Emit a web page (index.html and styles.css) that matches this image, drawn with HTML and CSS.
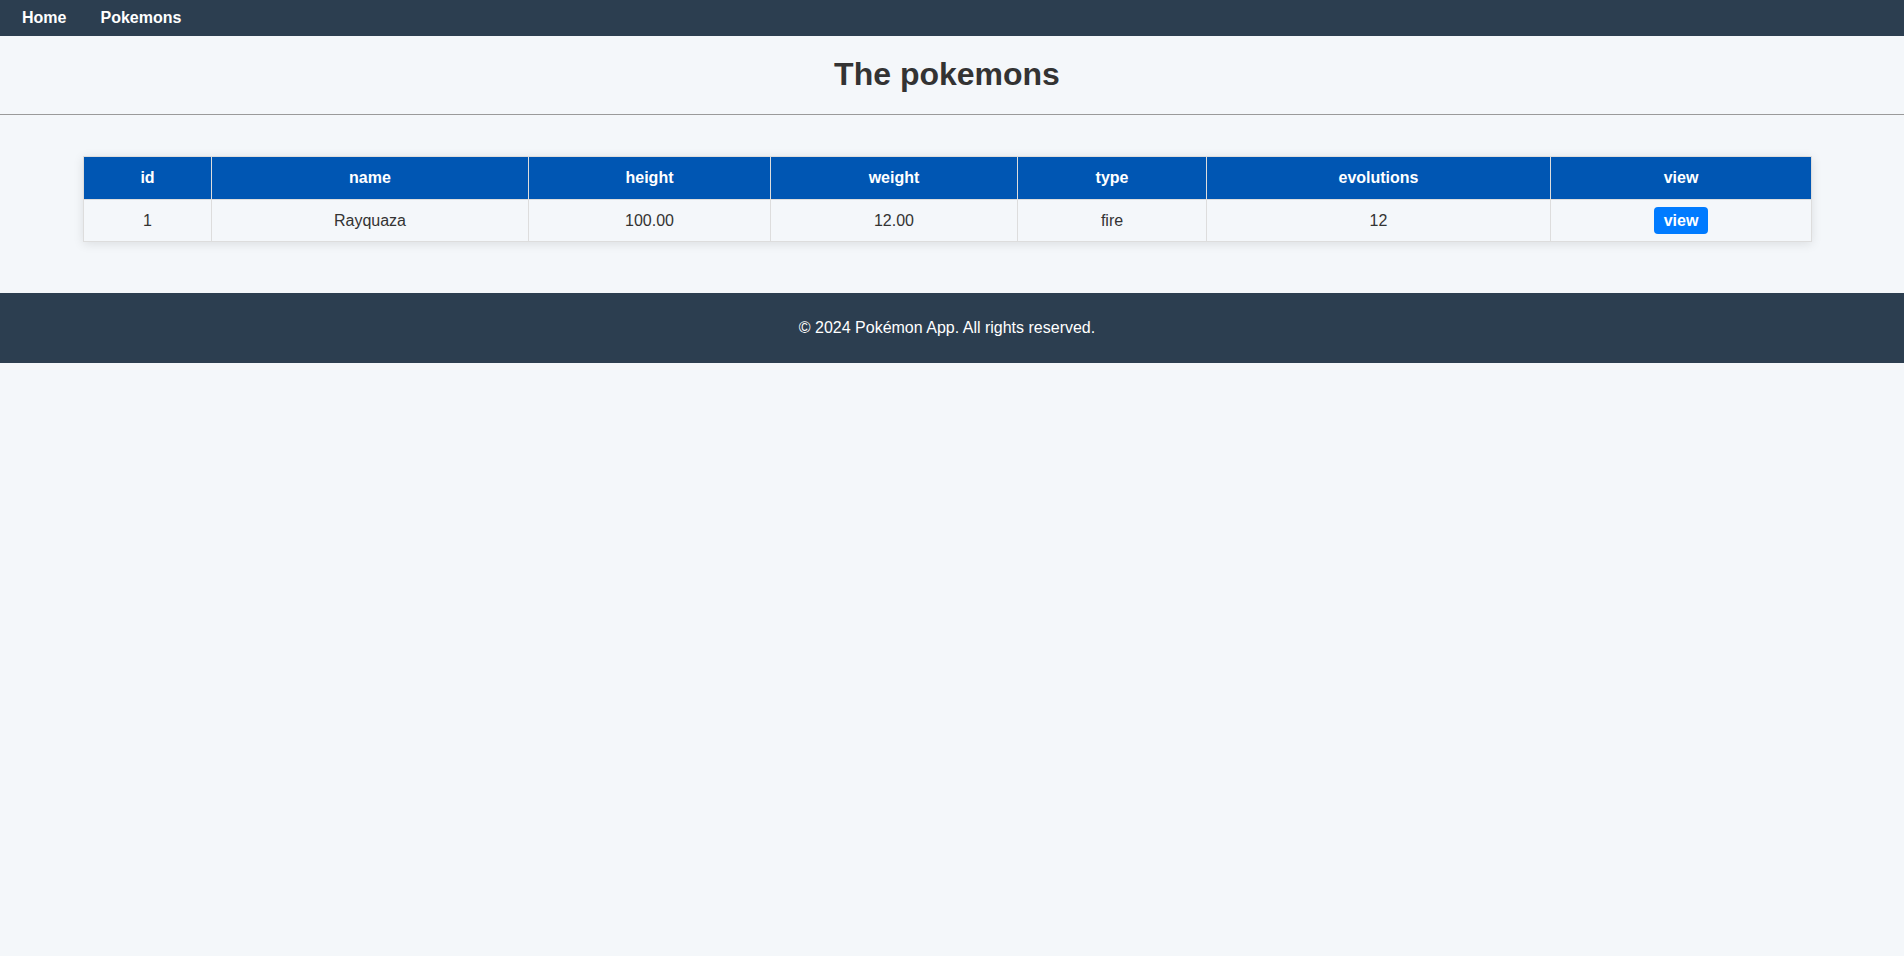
FILE: index.html
```html
<!DOCTYPE html>
<html lang="en">
<head>
<meta charset="utf-8">
<title>The pokemons</title>
<link rel="stylesheet" href="styles.css">
</head>
<body>
<nav class="topnav">
  <a class="topnav-link" href="#">Home</a>
  <a class="topnav-link" href="#">Pokemons</a>
</nav>
<header class="page-header">
  <h1 class="page-title">The pokemons</h1>
</header>
<main class="content">
  <table class="poke-table">
    <colgroup>
      <col class="c-id"><col class="c-name"><col class="c-height"><col class="c-weight"><col class="c-type"><col class="c-evo"><col class="c-view">
    </colgroup>
    <thead>
      <tr><th>id</th><th>name</th><th>height</th><th>weight</th><th>type</th><th>evolutions</th><th>view</th></tr>
    </thead>
    <tbody>
      <tr><td>1</td><td>Rayquaza</td><td>100.00</td><td>12.00</td><td>fire</td><td>12</td><td><a class="view-btn" href="#">view</a></td></tr>
    </tbody>
  </table>
</main>
<footer class="page-footer">© 2024 Pokémon App. All rights reserved.</footer>
</body>
</html>
```
FILE: styles.css
```css
html, body {
  margin: 0;
  padding: 0;
}
body {
  background: #f4f7fa;
  font-family: "Liberation Sans", Arial, sans-serif;
  font-size: 16px;
  color: #333;
}
.topnav {
  background: #2c3e50;
  height: 36px;
  display: flex;
  align-items: center;
  gap: 34px;
  padding: 0 22px;
}
.topnav-link {
  color: #fff;
  font-weight: bold;
  text-decoration: none;
}
.page-header {
  border-bottom: 1px solid #9a9a9a;
  padding: 20px 10px 21px 0;
  text-align: center;
}
.page-title {
  margin: 0;
  font-size: 32px;
  line-height: 37px;
  color: #333;
}
.content {
  padding: 41px 93px 51px 83px;
}
.poke-table {
  width: 100%;
  table-layout: fixed;
  border-collapse: collapse;
  border: 1px solid #ddd;
  box-shadow: 0 2px 10px rgba(0, 0, 0, 0.1);
  text-align: center;
}
.c-id { width: 128px; }
.c-name { width: 317px; }
.c-height { width: 242px; }
.c-weight { width: 247px; }
.c-type { width: 189px; }
.c-evo { width: 344px; }
.c-view { width: 261px; }
.poke-table th {
  background: #0056b3;
  color: #fff;
  font-weight: bold;
  padding: 12px;
  height: 18px;
  border: 1px solid #ddd;
  line-height: 18px;
}
.poke-table td {
  padding: 7px 12px;
  border: 1px solid #ddd;
  line-height: 18px;
  color: #333;
}
.view-btn {
  display: inline-block;
  background: #007bff;
  color: #fff;
  font-weight: bold;
  text-decoration: none;
  padding: 4px 10px;
  border-radius: 4px;
  line-height: 19px;
}
.page-footer {
  background: #2c3e50;
  color: #fff;
  text-align: center;
  padding: 26px 10px 26px 0;
  line-height: 18px;
}
```
